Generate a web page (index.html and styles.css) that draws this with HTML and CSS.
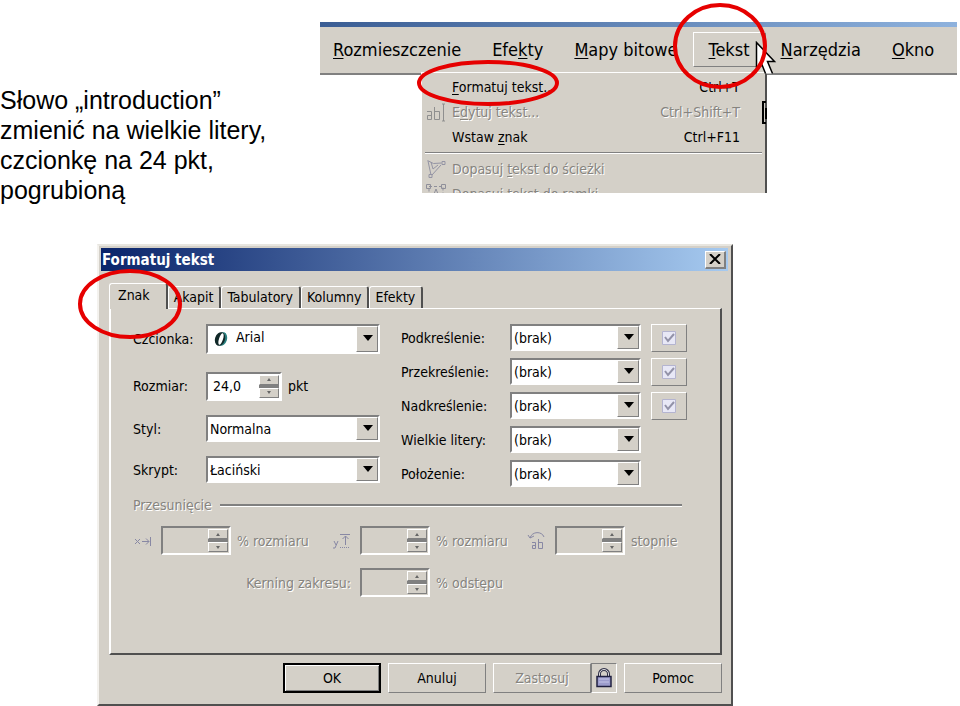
FILE: index.html
```html
<!DOCTYPE html>
<html lang="pl">
<head>
<meta charset="utf-8">
<title>Formatuj tekst</title>
<link rel="stylesheet" href="styles.css">
</head>
<body>
<header class="intro">
  <p class="note">Słowo „introduction”<br>zmienić na wielkie litery,<br>czcionkę na 24 pkt,<br>pogrubioną</p>
  <div class="app">
    <nav class="menubar">
      <button type="button"><u>R</u>ozmieszczenie</button>
      <button type="button">Efe<u>k</u>ty</button>
      <button type="button"><u>M</u>apy bitowe</button>
      <button type="button" class="open"><u>T</u>ekst</button>
      <button type="button"><u>N</u>arzędzia</button>
      <button type="button"><u>O</u>kno</button>
    </nav>
    <div class="menu">
      <button type="button"><i></i><span><u>F</u>ormatuj tekst...</span><kbd>Ctrl+T</kbd></button>
      <button type="button" disabled><i><svg width="22" height="24" viewBox="0 0 22 24" fill="none" stroke="#8f8f8f"><path d="M2 11.500h4.500v8H2.500v-4h4M9.500 7v12.500h5v-8h-5M17 4h1.500v17H17M20 4h-1.500v17H20"/></svg></i><span>E<u>d</u>ytuj tekst...</span><kbd>Ctrl+Shift+T</kbd></button>
      <button type="button"><i></i><span>Wstaw <u>z</u>nak</span><kbd>Ctrl+F11</kbd></button>
      <hr>
      <button type="button" disabled><i><svg width="22" height="24" viewBox="0 0 22 24" fill="none" stroke="#9494a4"><path d="M2.500 3.500l6 3 8-.5M16 8L7 18M3 4l3 14M6 5l2 7 5-4"/><path d="M17 4.500h3v3h-3zM4 17.500h3v3H4z"/></svg></i><span>Dopasuj <u>t</u>ekst do ścieżki</span></button>
      <button type="button" disabled><i><svg width="22" height="24" viewBox="0 0 22 24" fill="none" stroke="#8f8f9a"><path d="M4 4.500h14v16H4z" stroke-dasharray="3 2"/><path d="M1.500 2.500h4v4h-4zM16.500 2.500h4v4h-4zM7 17l4-10 4 10M8 13h6"/></svg></i><span>Dopasuj tekst do <u>r</u>amki</span></button>
    </div>
    <svg class="handle" width="5" height="24" viewBox="0 0 5 24"><path d="M4 1H1v21h3M4 7v11" fill="none" stroke="#000" stroke-width="2"/></svg>
    <svg class="cursor" width="22" height="34" viewBox="0 0 22 34"><path d="M1.500 1.500v26l5-5 4 10h7l-5-12h7z" fill="#fff"/><path d="M10.500 32.500l-4-10-5 5v-26l18 19h-7l5 12" fill="none" stroke="#000" stroke-width="1.500"/></svg>
    <svg class="ring ring-tekst" viewBox="0 0 94 88" fill="none"><ellipse cx="47" cy="44" rx="45" ry="41"/></svg>
    <svg class="ring ring-format" viewBox="0 0 144 46" fill="none"><ellipse cx="72" cy="23" rx="69" ry="21"/></svg>
  </div>
</header>
<main class="dialog">
  <div class="titlebar"><h1>Formatuj tekst</h1><button type="button" class="close" aria-label="Zamknij"><svg width="12" height="10" viewBox="0 0 12 10"><path d="M1 0l10 10M11 0L1 10" stroke="#000" stroke-width="2"/></svg></button></div>
  <div class="tabs">
    <button type="button" class="active">Znak</button>
    <button type="button">Akapit</button>
    <button type="button">Tabulatory</button>
    <button type="button">Kolumny</button>
    <button type="button">Efekty</button>
  </div>
  <section class="panel">
    <div class="fields">
      <div class="left">
        <div class="row font-row"><label for="font">Czcionka:</label><span class="combo tall"><svg class="glyph" width="26" height="26" viewBox="0 0 26 26"><ellipse cx="14" cy="13" rx="5" ry="7" transform="rotate(18 14 13)" fill="#2a8080"/><ellipse cx="12" cy="13" rx="5" ry="7" transform="rotate(18 12 13)" fill="#102828"/><ellipse cx="13" cy="13" rx="2" ry="6" transform="rotate(18 13 13)" fill="#fff"/></svg><select id="font"><option>Arial</option></select></span></div>
        <div class="row size-row"><label for="size">Rozmiar:</label><span class="spin live"><input id="size" value="24,0"><span class="steps"><button type="button" aria-label="Więcej"></button><button type="button" aria-label="Mniej"></button></span></span><span class="unit">pkt</span></div>
        <div class="row"><label for="style">Styl:</label><span class="combo"><select id="style"><option>Normalna</option></select></span></div>
        <div class="row"><label for="script">Skrypt:</label><span class="combo"><select id="script"><option>Łaciński</option></select></span></div>
      </div>
      <div class="right">
        <div class="row"><label for="under">Podkreślenie:</label><span class="combo"><select id="under"><option>(brak)</option></select></span><button type="button" class="check" aria-label="Edytuj podkreślenie"><svg width="14" height="14" viewBox="0 0 14 14"><path d="M.5.500h13v13H.5z" fill="#e8e8f6" stroke="#b4b4d0"/><path d="M3 6l3 4 6-7" fill="none" stroke="#9292a8" stroke-width="2"/></svg></button></div>
        <div class="row"><label for="strike">Przekreślenie:</label><span class="combo"><select id="strike"><option>(brak)</option></select></span><button type="button" class="check" aria-label="Edytuj przekreślenie"><svg width="14" height="14" viewBox="0 0 14 14"><path d="M.5.500h13v13H.5z" fill="#e8e8f6" stroke="#b4b4d0"/><path d="M3 6l3 4 6-7" fill="none" stroke="#9292a8" stroke-width="2"/></svg></button></div>
        <div class="row"><label for="over">Nadkreślenie:</label><span class="combo"><select id="over"><option>(brak)</option></select></span><button type="button" class="check" aria-label="Edytuj nadkreślenie"><svg width="14" height="14" viewBox="0 0 14 14"><path d="M.5.500h13v13H.5z" fill="#e8e8f6" stroke="#b4b4d0"/><path d="M3 6l3 4 6-7" fill="none" stroke="#9292a8" stroke-width="2"/></svg></button></div>
        <div class="row"><label for="caps">Wielkie litery:</label><span class="combo"><select id="caps"><option>(brak)</option></select></span></div>
        <div class="row"><label for="pos">Położenie:</label><span class="combo"><select id="pos"><option>(brak)</option></select></span></div>
      </div>
    </div>
    <fieldset class="shift" disabled>
      <legend>Przesunięcie</legend>
      <div class="grid">
        <label for="dx" aria-label="Przesunięcie w poziomie"><svg width="20" height="18" viewBox="0 0 20 18" fill="none" stroke="#8888a4"><path d="M2 7l5 5M7 7l-5 5M9 9.500h7M13 6.500l3 3-3 3M17.500 5v9"/></svg></label>
        <span class="spin"><input id="dx"><span class="steps"><button type="button" aria-label="Więcej"></button><button type="button" aria-label="Mniej"></button></span></span>
        <span class="unit">% rozmiaru</span>
        <label for="dy" aria-label="Przesunięcie w pionie"><svg width="20" height="18" viewBox="0 0 20 18" fill="none" stroke="#8888a4"><path d="M2 9l2 4M6 9l-3 7H1M8 2.500h10M13.500 4v9M10.500 7l3-3 3 3"/><path d="M8 15.500h10" stroke-dasharray="1 1"/></svg></label>
        <span class="spin"><input id="dy"><span class="steps"><button type="button" aria-label="Więcej"></button><button type="button" aria-label="Mniej"></button></span></span>
        <span class="unit">% rozmiaru</span>
        <label for="rot" aria-label="Obrót"><svg width="20" height="20" viewBox="0 0 20 20" fill="none" stroke="#8888a4"><path d="M3 7c2-7 12-7 14-1M1 4l2 3 4-2M5 11.500h3.500v6H5.500v-3h3M11.500 8v9.500h4v-6h-4"/></svg></label>
        <span class="spin"><input id="rot"><span class="steps"><button type="button" aria-label="Więcej"></button><button type="button" aria-label="Mniej"></button></span></span>
        <span class="unit">stopnie</span>
        <label class="kern" for="kern">Kerning zakresu:</label>
        <span class="spin"><input id="kern"><span class="steps"><button type="button" aria-label="Więcej"></button><button type="button" aria-label="Mniej"></button></span></span>
        <span class="unit">% odstępu</span>
      </div>
    </fieldset>
  </section>
  <footer class="actions">
    <button type="button" class="default">OK</button>
    <button type="button">Anuluj</button>
    <div class="apply"><button type="button" disabled>Zastosuj</button><button type="button" class="lock" aria-label="Automatycznie"><svg width="18" height="20" viewBox="0 0 18 20"><path d="M4.500 9V6a4.500 4.500 0 019 0v3" fill="none" stroke="#303048" stroke-width="3"/><path d="M4.500 9V6a4.500 4.500 0 019 0v3" fill="none" stroke="#ddd"/><path d="M2 8.500h14v10H2z" fill="#9c9ccc" stroke="#202040" stroke-width="1.500"/><path d="M4 11h10M4 14h10" stroke="#c4c4e6"/></svg></button></div>
    <button type="button">Pomoc</button>
  </footer>
  <svg class="ring ring-znak" viewBox="0 0 106 72" fill="none"><ellipse cx="53" cy="36" rx="50" ry="33"/></svg>
</main>
</body>
</html>
```
FILE: styles.css
```css
* { box-sizing: border-box; }
body {
  margin: 0;
  background: #fff;
  color: #000;
  font: 14px/16px "DejaVu Sans Condensed", "DejaVu Sans", sans-serif;
}
button, input, select { font: inherit; color: inherit; }
button { background: #d4d0c8; padding: 0; border: 0; }
svg { display: block; flex: none; }
u { text-underline-offset: 2px; }

.intro { display: flex; align-items: flex-start; height: 244px; padding: 22px 3px 0 0; }
.note {
  flex: 0 0 320px;
  margin: 63px 0 0;
  font: 25px/30px "Liberation Sans", sans-serif;
}
.app { flex: 1; position: relative; }
.menubar {
  display: flex;
  align-items: center;
  gap: 5px;
  height: 53px;
  padding-bottom: 1px;
  border-bottom: 2px solid #808080;
  border-top: 5px solid transparent;
  background: linear-gradient(#d4d0c8, #d4d0c8) padding-box, linear-gradient(90deg, #3a5d94, #8eb2dd) border-box;
  font-size: 18px;
  line-height: 20px;
}
.menubar button { height: 35px; padding: 0 12px; border: 1px solid transparent; white-space: nowrap; background: none; }
.menubar .open { border-color: #fff #808080 #808080 #fff; padding: 0 15px; margin: 0 -3px; }
.menu {
  position: relative;
  height: 121px;
  margin: -3px 190px 0 101px;
  overflow: hidden;
  background: #d4d0c8;
  border: solid #fff;
  border-width: 1px 2px 0 1px;
  border-right-color: #505050;
  padding: 1px 3px 0;
}
.menu button { display: flex; align-items: center; width: 100%; height: 25px; text-align: left; }
.menu i { width: 27px; }
.menu kbd { margin-left: auto; margin-right: 22px; font: inherit; }
.menu hr { height: 2px; margin: 3px 0 2px; border: 0; background: #808080; border-bottom: 1px solid #fff; }
button:disabled, .shift { color: #86847f; text-shadow: 1px 1px #fff; }
.handle { position: absolute; left: 442px; top: 79px; }
.cursor { position: absolute; left: 435px; top: 19px; }
.ring { position: absolute; stroke: #e60000; stroke-width: 4; pointer-events: none; }
.ring-tekst { left: 353px; top: -20px; width: 94px; height: 88px; }
.ring-format { left: 96px; top: 38px; width: 144px; height: 46px; }

.dialog {
  position: relative;
  margin: 0 227px 0 97px;
  padding: 2px 3px 11px 2px;
  background: #d4d0c8;
  border: 2px solid #fff;
  border-color: #e8e6e0 #505050 #505050 #f4f2ee;
}
.titlebar {
  display: flex;
  align-items: center;
  justify-content: space-between;
  height: 23px;
  padding: 0 2px 0 1px;
  background: linear-gradient(90deg, #0a246a, #a6caf0);
}
.titlebar h1 { margin: 0; color: #fff; font-size: 15px; line-height: 16px; }
.close { display: grid; place-items: center; width: 21px; height: 18px; }
.close, .actions button, .check, .steps button {
  border: 1px solid;
  border-color: #fff #808080 #808080 #fff;
}
.close { border-width: 1px 2px 2px 1px; }
.tabs { display: flex; align-items: flex-end; height: 37px; padding-left: 8px; }
.tabs button {
  height: 22px;
  padding: 0 6px 1px 5px;
  border: solid;
  border-width: 1px 2px 0 1px;
  border-color: #fff #505050 #fff #fff;
  border-radius: 3px 3px 0 0;
}
.tabs .active { height: 26px; padding: 0 16px 3px 8px; margin-bottom: -1px; position: relative; }
.panel {
  margin: 0 6px 0 8px;
  height: 347px;
  padding: 15px 32px 0 22px;
  border: 2px solid;
  border-color: #fff #505050 #505050 #fff;
  border-top-width: 1px;
}
.fields { display: flex; gap: 21px; }
.row { display: flex; align-items: center; height: 27px; }
.left { flex: 1; display: flex; flex-direction: column; gap: 14px; }
.right { flex: 0 0 287px; display: flex; flex-direction: column; gap: 7px; }
.left label { flex: 0 0 73px; }
.right label { flex: 0 0 109px; }
.left .font-row, .left .size-row { height: 30px; }
.left .font-row { margin-bottom: 3px; }
.combo, .spin {
  display: flex;
  background: #fff;
  border: 2px solid;
  border-color: #808080 #fff #fff #808080;
}
.combo { position: relative; flex: 1; height: 27px; }
.right .combo { flex: 0 0 131px; }
.tall { height: 30px; }
.combo select { appearance: none; flex: 1; min-width: 0; border: 0; background: none; padding: 0 2px; border-radius: 0; }
.tall select { padding-bottom: 4px; }
.combo::before {
  content: "";
  position: absolute;
  inset: 0 0 0 auto;
  width: 20px;
  background: #d4d0c8;
  border: 1px solid;
  border-color: #fff #808080 #808080 #fff;
}
.combo::after {
  content: "";
  position: absolute;
  right: 5px;
  top: 50%;
  margin-top: -4px;
  border: 5px solid transparent;
  border-top: 6px solid #000;
  border-bottom: 0;
}
.check { display: grid; place-items: center; width: 36px; height: 28px; margin-left: 10px; }
.spin { flex: none; width: 70px; height: 29px; padding: 1px; background: #d4d0c8; }
.live { width: 76px; background: #fff; }
.spin input { flex: 1; min-width: 0; width: 0; border: 0; padding: 0 4px; background: none; }
.unit { padding-left: 6px; }
.steps { flex: 0 0 20px; display: flex; flex-direction: column; justify-content: space-between; background: #808080; }
.steps button { display: grid; place-items: center; height: 10px; background: #d4d0c8; }
.steps button::before { content: ""; border: 2px solid transparent; border-bottom: 3px solid #666; border-top: 0; }
.steps button:last-child::before { border-top: 3px solid #666; border-bottom: 0; }
.shift { margin: 10px 0 0; padding: 0; border: 0; min-width: 0; }
.shift legend { display: flex; width: 100%; align-items: center; gap: 8px; padding: 0; }
.shift legend::after { content: ""; flex: 1; margin-right: 6px; border-top: 2px solid #808080; border-bottom: 1px solid #fff; }
.grid {
  display: grid;
  grid-template-columns: 28px 70px 101px 28px 70px 97px 28px 70px 1fr;
  row-gap: 13px;
  padding-top: 13px;
  align-items: center;
  white-space: nowrap;
}
.kern { grid-column: 1 / 5; justify-self: end; padding-right: 9px; }
.actions { display: flex; justify-content: flex-end; gap: 7px; padding: 8px 6px 0 0; }
.actions button { width: 98px; height: 30px; }
.actions .default { border: 2px solid #000; box-shadow: inset 1px 1px #fff, inset -1px -1px #808080; }
.apply { display: flex; }
.actions .lock { display: grid; place-items: center; width: 26px; border-color: #808080 #fff #fff #808080; }
.ring-znak { left: -22px; top: 22px; width: 106px; height: 72px; }
```
